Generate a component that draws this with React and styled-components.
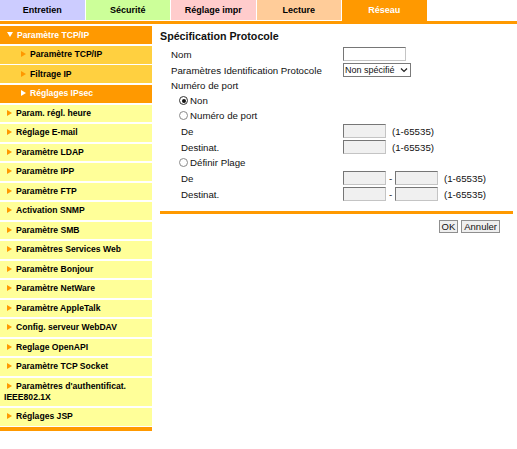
import React from "react";
import styled, { createGlobalStyle } from "styled-components";

const Global = createGlobalStyle`
  html, body { margin: 0; padding: 0; background: #fff; }
  body { font-family: "Liberation Sans", Arial, sans-serif; color: #000; }
  * { box-sizing: border-box; }
`;

const Page = styled.div`
  width: 517px;
  height: 449px;
  overflow: hidden;
`;

const TabBar = styled.div`
  display: flex;
  gap: 1px;
  height: 21px;
  align-items: flex-start;
`;

const Tab = styled.div`
  width: 84.5px;
  height: ${(p) => (p.$active ? 21 : 20)}px;
  background: ${(p) => p.$bg};
  color: ${(p) => (p.$active ? "#fff" : "#000")};
  font-weight: bold;
  font-size: 9px;
  display: flex;
  justify-content: center;
  padding-top: 5px;
  line-height: 11px;
`;

const TopRule = styled.div`
  height: 3px;
  background: #ff9900;
  margin-bottom: 2px;
`;

const Main = styled.div`
  display: flex;
  gap: 8px;
  align-items: flex-start;
`;

const Sidebar = styled.nav`
  width: 152px;
  display: flex;
  flex-direction: column;
`;

const Group = styled.div`
  display: flex;
  flex-direction: column;
  gap: ${(p) => p.$gap}px;
  margin-bottom: ${(p) => p.$mb || 0}px;
`;

const NavItem = styled.div`
  background: ${(p) => p.$bg};
  color: ${(p) => (p.$light ? "#fff" : "#000")};
  font-weight: bold;
  font-size: 8.6px;
  line-height: 11px;
  min-height: ${(p) => p.$h}px;
  padding: ${(p) => (p.$h - 11) / 2}px 4px ${(p) => (p.$h - 11) / 2}px ${(p) => p.$pl}px;
`;

const Arrow = styled.span`
  display: inline-block;
  width: 0;
  height: 0;
  border-top: 3px solid transparent;
  border-bottom: 3px solid transparent;
  border-left: 5px solid ${(p) => p.$color};
  margin: 0 4px 0 3px;
  vertical-align: 0px;
`;

const Down = styled.span`
  display: inline-block;
  width: 0;
  height: 0;
  border-left: 3px solid transparent;
  border-right: 3px solid transparent;
  border-top: 5px solid #fff;
  margin: 0 4px 0 3px;
  vertical-align: 1px;
`;

const BottomRule = styled.div`
  height: 3.5px;
  background: #ff9900;
  margin-top: 1.5px;
`;

const Content = styled.section`
  width: 353px;
  display: flex;
  flex-direction: column;
`;

const Title = styled.h1`
  margin: 3px 0 3px;
  font-size: 10.7px;
  line-height: 14px;
  font-weight: bold;
  color: #111;
`;

const Row = styled.div`
  display: flex;
  align-items: center;
  height: ${(p) => p.$h}px;
  font-size: 9.7px;
  color: #111;
`;

const Label = styled.div`
  width: 183px;
  padding-left: ${(p) => p.$indent}px;
  display: flex;
  align-items: center;
  white-space: nowrap;
`;

const Radio = styled.span`
  width: 9px;
  height: 9px;
  border-radius: 50%;
  border: 1px solid ${(p) => (p.$checked ? "#333" : "#8a8a8a")};
  background: #fff;
  display: inline-flex;
  align-items: center;
  justify-content: center;
  margin-right: 2px;
  &::after {
    content: "";
    width: 4px;
    height: 4px;
    border-radius: 50%;
    background: ${(p) => (p.$checked ? "#111" : "transparent")};
  }
`;

const Field = styled.div`
  display: flex;
  align-items: center;
`;

const TextBox = styled.div`
  width: ${(p) => p.$w}px;
  height: 14px;
  background: ${(p) => (p.$disabled ? "#f0f0f0" : "#fff")};
  border: 1px solid;
  border-color: #767676 #c4c4c4 #c4c4c4 #767676;
`;

const Select = styled.div`
  width: 68px;
  height: 14px;
  border: 1px solid #7a7a7a;
  background: #fff;
  font-size: 9px;
  line-height: 12px;
  padding: 0 2px 0 1px;
  display: flex;
  align-items: center;
  justify-content: space-between;
  color: #111;
  white-space: nowrap;
`;

const Range = styled.span`
  margin-left: 6px;
`;

const Dash = styled.span`
  width: 9px;
  text-align: center;
`;

const Divider = styled.div`
  height: 3px;
  background: #ff9900;
  margin-top: 9px;
`;

const Actions = styled.div`
  display: flex;
  justify-content: flex-end;
  gap: 3px;
  padding-right: 13px;
  margin-top: 6px;
`;

const Button = styled.button`
  height: 13px;
  padding: 0 2px;
  font-family: "Liberation Sans", Arial, sans-serif;
  font-size: 9.5px;
  line-height: 11px;
  background: #efefef;
  border: 1px solid #8f8f8f;
  border-radius: 0;
  color: #111;
`;

const tabs = [
  { t: "Entretien", bg: "#ccccff" },
  { t: "Sécurité", bg: "#ccff99" },
  { t: "Réglage impr", bg: "#ffcccc" },
  { t: "Lecture", bg: "#ffcc99" },
  { t: "Réseau", bg: "#ff9900", active: true },
];

const lower = [
  "Param. régl. heure",
  "Réglage E-mail",
  "Paramètre LDAP",
  "Paramètre IPP",
  "Paramètre FTP",
  "Activation SNMP",
  "Paramètre SMB",
  "Paramètres Services Web",
  "Paramètre Bonjour",
  "Paramètre NetWare",
  "Paramètre AppleTalk",
  "Config. serveur WebDAV",
  "Reglage OpenAPI",
  "Paramètre TCP Socket",
  "Paramètres d'authentificat. IEEE802.1X",
  "Réglages JSP",
];

const Chevron = () => (
  <svg width="8" height="6" viewBox="0 0 8 6">
    <path d="M1 1.5 L4 4.5 L7 1.5" fill="none" stroke="#222" strokeWidth="1.2" />
  </svg>
);

export default function App() {
  return (
    <Page>
      <Global />
      <TabBar>
        {tabs.map((x) => (
          <Tab key={x.t} $bg={x.bg} $active={x.active}>
            {x.t}
          </Tab>
        ))}
      </TabBar>
      <TopRule />
      <Main>
        <Sidebar>
          <Group $gap={1.5} $mb={2}>
            <NavItem $bg="#ff9900" $light $h={18} $pl={4}>
              <Down />
              Paramètre TCP/IP
            </NavItem>
            <NavItem $bg="#ffd040" $h={18} $pl={18}>
              <Arrow $color="#ff9900" />
              Paramètre TCP/IP
            </NavItem>
            <NavItem $bg="#ffd040" $h={18} $pl={18}>
              <Arrow $color="#ff9900" />
              Filtrage IP
            </NavItem>
            <NavItem $bg="#ff9900" $light $h={18} $pl={18}>
              <Arrow $color="#fff" />
              Réglages IPsec
            </NavItem>
          </Group>
          <Group $gap={2}>
            {lower.map((l) => (
              <NavItem key={l} $bg="#ffff99" $h={17.5} $pl={4}>
                <Arrow $color="#ff9900" />
                {l}
              </NavItem>
            ))}
          </Group>
          <BottomRule />
        </Sidebar>
        <Content>
          <Title>Spécification Protocole</Title>
          <Row $h={16}>
            <Label $indent={11}>Nom</Label>
            <Field>
              <TextBox $w={63} />
            </Field>
          </Row>
          <Row $h={16}>
            <Label $indent={11}>Paramètres Identification Protocole</Label>
            <Field>
              <Select>
                <span>Non spécifié</span>
                <Chevron />
              </Select>
            </Field>
          </Row>
          <Row $h={15}>
            <Label $indent={11}>Numéro de port</Label>
          </Row>
          <Row $h={15}>
            <Label $indent={19}>
              <Radio $checked />
              Non
            </Label>
          </Row>
          <Row $h={15}>
            <Label $indent={19}>
              <Radio />
              Numéro de port
            </Label>
          </Row>
          <Row $h={16}>
            <Label $indent={21}>De</Label>
            <Field>
              <TextBox $w={43} $disabled />
              <Range>(1-65535)</Range>
            </Field>
          </Row>
          <Row $h={16}>
            <Label $indent={21}>Destinat.</Label>
            <Field>
              <TextBox $w={43} $disabled />
              <Range>(1-65535)</Range>
            </Field>
          </Row>
          <Row $h={15}>
            <Label $indent={19}>
              <Radio />
              Définir Plage
            </Label>
          </Row>
          <Row $h={16}>
            <Label $indent={21}>De</Label>
            <Field>
              <TextBox $w={43} $disabled />
              <Dash>-</Dash>
              <TextBox $w={43} $disabled />
              <Range>(1-65535)</Range>
            </Field>
          </Row>
          <Row $h={16}>
            <Label $indent={21}>Destinat.</Label>
            <Field>
              <TextBox $w={43} $disabled />
              <Dash>-</Dash>
              <TextBox $w={43} $disabled />
              <Range>(1-65535)</Range>
            </Field>
          </Row>
          <Divider />
          <Actions>
            <Button>OK</Button>
            <Button>Annuler</Button>
          </Actions>
        </Content>
      </Main>
    </Page>
  );
}
